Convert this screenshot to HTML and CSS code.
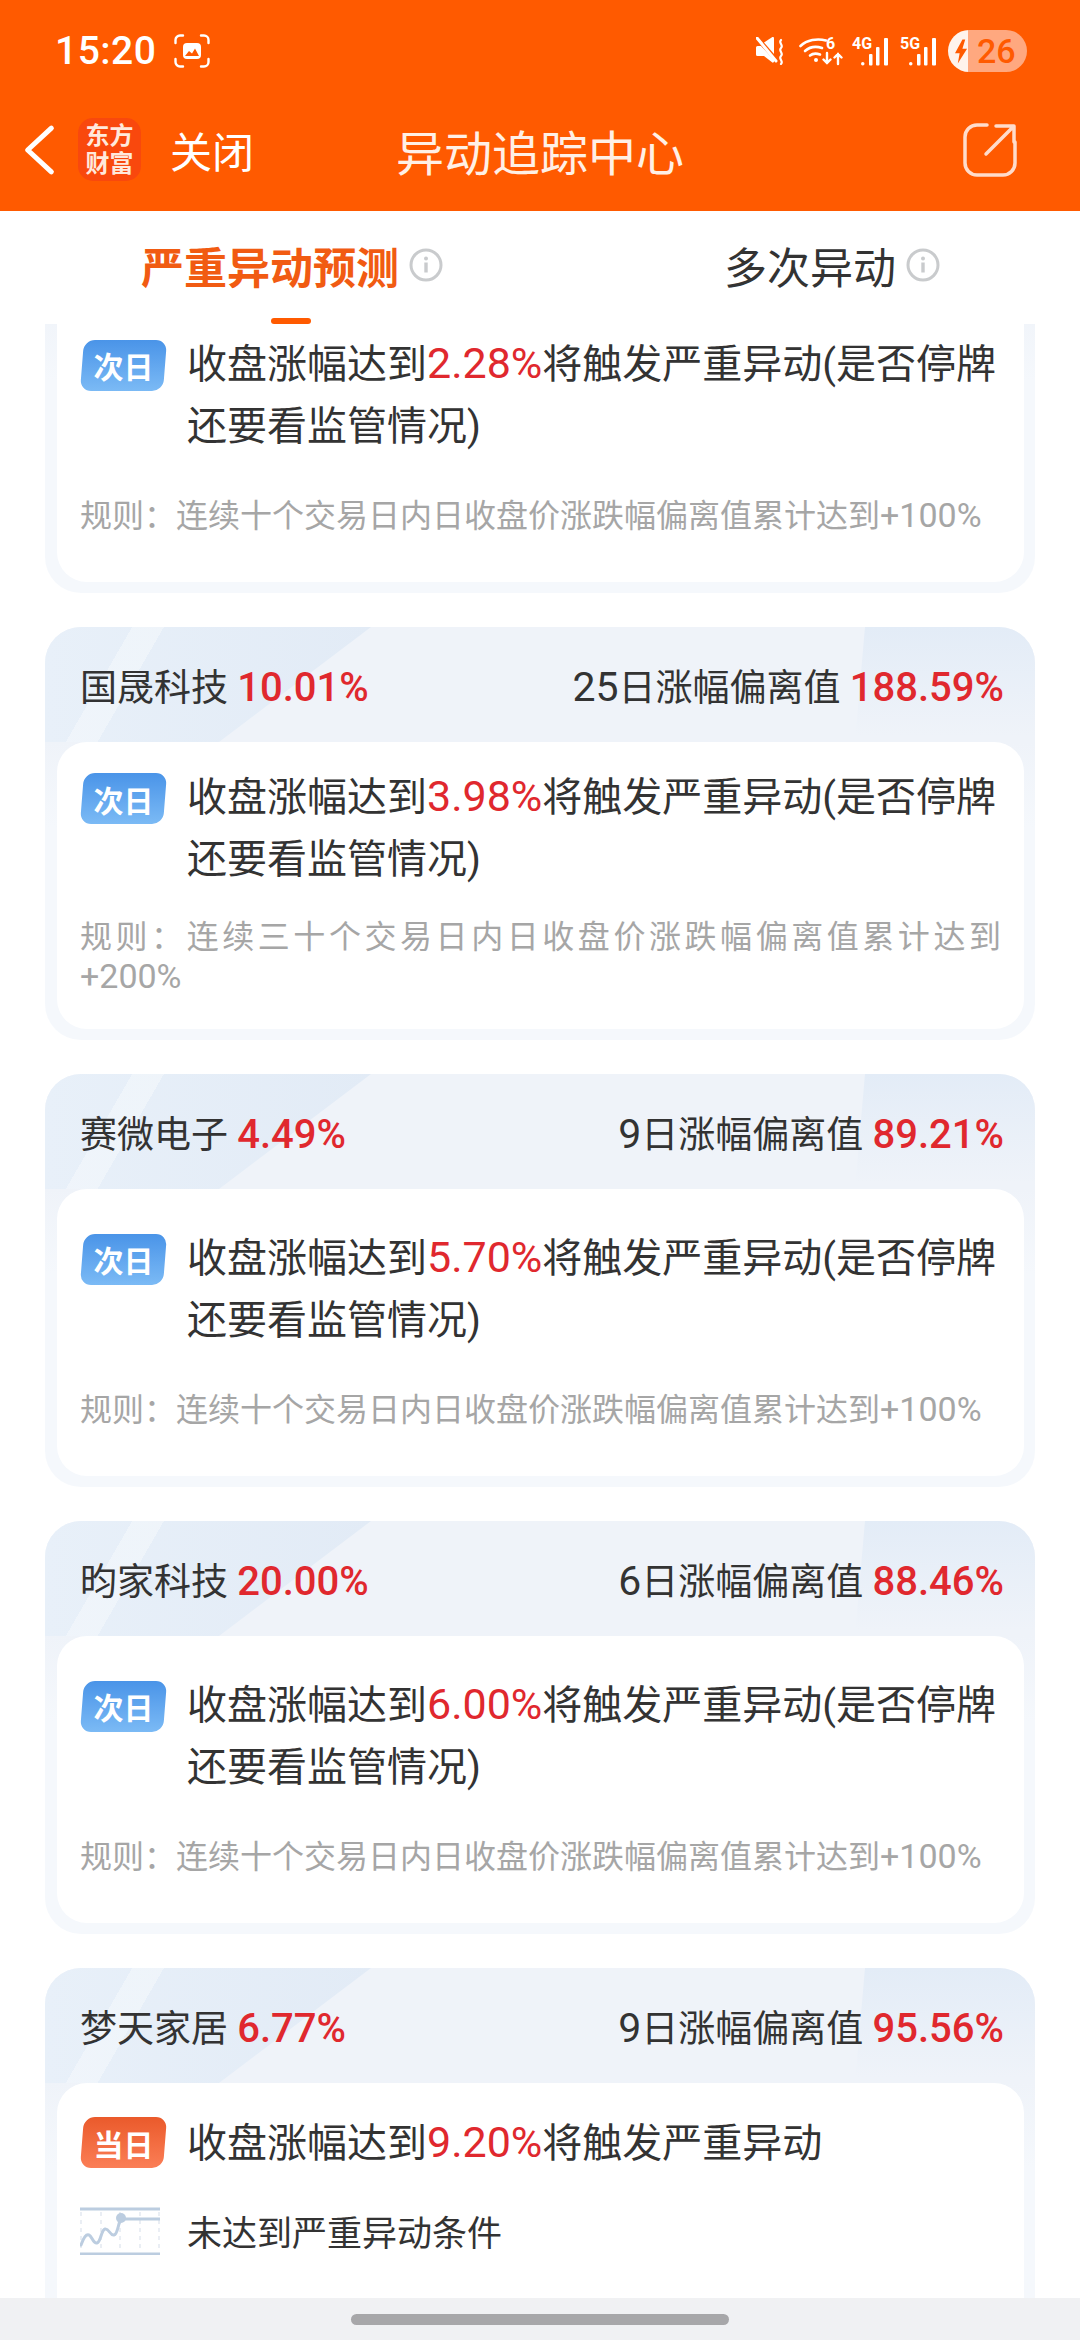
FILE: index.html
```html
<!DOCTYPE html>
<html lang="zh-CN">
<head>
    <meta charset="UTF-8">
    <meta name="viewport" content="width=device-width, initial-scale=1.0">
    <title>异动追踪中心</title>
    <link rel="stylesheet" href="styles.css">
</head>
<body>

<header class="top">
    <div class="status">
        <div class="status-left">
            <span class="time">15:20</span>
            <svg class="shot" viewBox="0 0 36 34" fill="none" stroke="#fff" stroke-width="2.4" stroke-linecap="round">
                <path d="M1.5 9V6a4.5 4.5 0 0 1 4.5-4.5h3M27 1.5h3A4.5 4.5 0 0 1 34.5 6v3M34.5 25v3a4.5 4.5 0 0 1-4.5 4.5h-3M9 32.500H6A4.5 4.500 0 0 1 1.500 28v-3"/>
                <rect x="9" y="9" width="18" height="16" rx="4" fill="#fff" stroke="none"/>
                <path d="M11 22l4-5 3 2.500 3-5 4 7.500z" fill="#ff5a00" stroke="none"/>
            </svg>
        </div>
        <div class="status-right">
            <svg class="ic-mute" viewBox="0 0 29 28" fill="#fff">
                <path d="M0 10.500a1.500 1.500 0 0 1 1.500-1.500H5l13 14v1.500c0 1-1.200 1.500-2 .8L8 19H1.500A1.500 1.500 0 0 1 0 17.500z"/>
                <path d="M8 5.500l8-5.300c.8-.5 2-.1 2 1V17z"/>
                <path d="M1 1l19 23" stroke="#fff" stroke-width="3" stroke-linecap="round"/>
                <path d="M25 3c-3 3 3 5 0 8s3 5 0 8 3 5 0 8" fill="none" stroke="#fff" stroke-width="2.200" stroke-linecap="round"/>
            </svg>
            <svg class="ic-wifi" viewBox="0 0 44 29" fill="none" stroke="#fff" stroke-width="2.600" stroke-linecap="round">
                <path d="M1.500 9C8 3 18 1 27 3.500"/>
                <path d="M6 14c4.500-4 11-5 17-3"/>
                <path d="M11 18.500c2.500-2 6-2.500 10-1"/>
                <circle cx="17" cy="23" r="2" fill="#fff" stroke="none"/>
                <text class="ic-text" x="27" y="12" fill="#fff" stroke="none">6</text>
                <path d="M28 16v10m-3.500-3.500L28 26l3.500-3.500M39 27V17m-3.500 3.500L39 17l3.500 3.500" stroke-width="2.400"/>
            </svg>
            <svg class="ic-signal" viewBox="0 0 38 29" fill="#fff">
                <text class="ic-text" x="0" y="12">4G</text>
                <rect x="9" y="25" width="3.500" height="3.500" rx="1.700"/>
                <rect x="17" y="17" width="3.500" height="11.500" rx="1"/>
                <rect x="24" y="10" width="3.500" height="18.500" rx="1"/>
                <rect x="32" y="1" width="4" height="27.500" rx="1"/>
            </svg>
            <svg class="ic-signal" viewBox="0 0 38 29" fill="#fff">
                <text class="ic-text" x="0" y="12">5G</text>
                <rect x="9" y="25" width="3.500" height="3.500" rx="1.700"/>
                <rect x="17" y="17" width="3.500" height="11.500" rx="1"/>
                <rect x="24" y="10" width="3.500" height="18.500" rx="1"/>
                <rect x="32" y="1" width="4" height="27.500" rx="1"/>
            </svg>
            <div class="battery">
                <svg class="bolt" viewBox="0 0 14 26" fill="#ff5a00"><path d="M8 0L0 15h5l-2 11 10-16H8l3-10z"/></svg>
                <span>26</span>
            </div>
        </div>
    </div>

    <nav class="nav">
        <div class="nav-left">
            <svg class="back" viewBox="0 0 34 54" fill="none" stroke="#fff" stroke-width="5.500" stroke-linecap="round" stroke-linejoin="round">
                <path d="M30 3L4 27l26 24"/>
            </svg>
            <div class="logo"><span>东方</span><span>财富</span></div>
            <span class="close">关闭</span>
        </div>
        <div class="nav-title">异动追踪中心</div>
        <svg class="share" viewBox="0 0 54 54" fill="none" stroke="#ffdccb" stroke-width="3.500" stroke-linecap="round" stroke-linejoin="round">
            <path d="M24 2H14A12 12 0 0 0 2 14v26a12 12 0 0 0 12 12h26a12 12 0 0 0 12-12V19"/>
            <path d="M23 31L50 4M33 3h18v16"/>
        </svg>
    </nav>
</header>

<div class="tabs">
    <div class="tab tab-active">
        <div class="tab-label">
            <span>严重异动预测</span>
            <svg class="info" viewBox="0 0 34 34" fill="none"><circle cx="17" cy="17" r="15" stroke="#c9cbcd" stroke-width="3"/><circle cx="17" cy="10.500" r="2" fill="#c9cbcd"/><rect x="15.300" y="14.500" width="3.400" height="10" fill="#c9cbcd"/></svg>
        </div>
        <div class="tab-line"></div>
    </div>
    <div class="tab">
        <div class="tab-label">
            <span>多次异动</span>
            <svg class="info" viewBox="0 0 34 34" fill="none"><circle cx="17" cy="17" r="15" stroke="#c9cbcd" stroke-width="3"/><circle cx="17" cy="10.500" r="2" fill="#c9cbcd"/><rect x="15.300" y="14.500" width="3.400" height="10" fill="#c9cbcd"/></svg>
        </div>
    </div>
</div>

<main class="list">
    <!-- first card is scrolled up under the tabs -->
    <section class="card card-scrolled">
        <div class="card-head"></div>
        <div class="card-body">
            <div class="title-row">
                <span class="badge badge-next">次日</span>
                <p class="title">收盘涨幅达到<em>2.28%</em>将触发严重异动(是否停牌还要看监管情况)</p>
            </div>
            <p class="rule">规则：连续十个交易日内日收盘价涨跌幅偏离值累计达到<span class="rule-num">+100%</span></p>
        </div>
    </section>

    <section class="card">
        <div class="card-head">
            <span>国晟科技 <em>10.01%</em></span>
            <span><span class="days">25</span>日涨幅偏离值 <em>188.59%</em></span>
        </div>
        <div class="card-body">
            <div class="title-row">
                <span class="badge badge-next">次日</span>
                <p class="title">收盘涨幅达到<em>3.98%</em>将触发严重异动(是否停牌还要看监管情况)</p>
            </div>
            <p class="rule">规则：连续三十个交易日内日收盘价涨跌幅偏离值累计达到<span class="rule-num">+200%</span></p>
        </div>
    </section>

    <section class="card">
        <div class="card-head">
            <span>赛微电子 <em>4.49%</em></span>
            <span><span class="days">9</span>日涨幅偏离值 <em>89.21%</em></span>
        </div>
        <div class="card-body">
            <div class="title-row">
                <span class="badge badge-next">次日</span>
                <p class="title">收盘涨幅达到<em>5.70%</em>将触发严重异动(是否停牌还要看监管情况)</p>
            </div>
            <p class="rule">规则：连续十个交易日内日收盘价涨跌幅偏离值累计达到<span class="rule-num">+100%</span></p>
        </div>
    </section>

    <section class="card">
        <div class="card-head">
            <span>昀家科技 <em>20.00%</em></span>
            <span><span class="days">6</span>日涨幅偏离值 <em>88.46%</em></span>
        </div>
        <div class="card-body">
            <div class="title-row">
                <span class="badge badge-next">次日</span>
                <p class="title">收盘涨幅达到<em>6.00%</em>将触发严重异动(是否停牌还要看监管情况)</p>
            </div>
            <p class="rule">规则：连续十个交易日内日收盘价涨跌幅偏离值累计达到<span class="rule-num">+100%</span></p>
        </div>
    </section>

    <section class="card">
        <div class="card-head">
            <span>梦天家居 <em>6.77%</em></span>
            <span><span class="days">9</span>日涨幅偏离值 <em>95.56%</em></span>
        </div>
        <div class="card-body card-body-today">
            <div class="title-row">
                <span class="badge badge-today">当日</span>
                <p class="title">收盘涨幅达到<em>9.20%</em>将触发严重异动</p>
            </div>
            <div class="note-row">
                <svg class="note-chart" viewBox="0 0 80 48" fill="none" stroke="#bccde0">
                    <path d="M1 5v40M21 5v40M40 5v40M60 5v40M79 5v40" stroke="#e3e9f1" stroke-width="1.500" stroke-dasharray="4 4"/>
                    <path d="M0 2h80M0 47h80" stroke-width="3"/>
                    <path d="M41 12h39" stroke-width="3"/>
                    <path d="M1 38C4 30 6 27 9 28s4 9 8 8 4-13 8-14 5 7 9 6 4-12 7-16" stroke-width="3" stroke-linecap="round"/>
                    <circle cx="41" cy="11" r="5" fill="#bccde0" stroke="none"/>
                </svg>
                <span class="note-text">未达到严重异动条件</span>
            </div>
        </div>
    </section>
</main>

<div class="home-bar"><div class="home-pill"></div></div>

</body>
</html>
```

FILE: styles.css
```css
* {
    box-sizing: border-box;
}
body {
    margin: 0;
    height: 2340px;
    display: flex;
    flex-direction: column;
    overflow: hidden;
    background: #fff;
    color: #333;
    font-family: Roboto, "Noto Sans CJK SC", sans-serif;
}
p {
    margin: 0;
}
em {
    font-style: normal;
    color: #e0282e;
}

/* orange header */
.top {
    height: 211px;
    background: #ff5a00;
    color: #fff;
    flex-shrink: 0;
}
.status {
    height: 102px;
    display: flex;
    justify-content: space-between;
    align-items: center;
    padding: 0 53px 0 55px;
}
.status-left {
    display: flex;
    align-items: center;
    gap: 18px;
}
.time {
    font-size: 39px;
    font-weight: 500;
    letter-spacing: 0.5px;
}
.shot {
    width: 36px;
    height: 34px;
}
.status-right {
    display: flex;
    align-items: center;
}
.ic-mute {
    width: 29px;
    height: 28px;
    margin-right: 14px;
}
.ic-wifi {
    width: 44px;
    height: 29px;
    margin-right: 9px;
}
.ic-signal {
    width: 38px;
    height: 29px;
    margin-right: 10px;
}
.ic-text {
    font-family: Roboto, sans-serif;
    font-size: 16px;
    font-weight: 700;
}
.battery {
    width: 79px;
    height: 42px;
    border-radius: 21px;
    background: linear-gradient(90deg, #fff3ec 20px, #ffa87f 20px);
    display: flex;
    align-items: center;
    padding-left: 7px;
    color: #ff5a00;
    font-size: 34px;
    font-weight: 500;
}
.bolt {
    width: 13px;
    height: 25px;
    margin-right: 9px;
}
.nav {
    height: 109px;
    display: grid;
    grid-template-columns: 1fr auto 1fr;
    align-items: center;
    padding: 0 24px 14px;
}
.nav-left {
    display: flex;
    align-items: center;
}
.back {
    width: 31px;
    height: 52px;
    margin-right: 23px;
}
.logo {
    width: 63px;
    height: 63px;
    border-radius: 15px;
    background: #f9480d;
    display: flex;
    flex-direction: column;
    align-items: center;
    justify-content: center;
    font-size: 24px;
    font-weight: 700;
    line-height: 28px;
    color: #ffe9dc;
}
.close {
    font-size: 42px;
    margin-left: 29px;
}
.nav-title {
    font-size: 48px;
    color: #fff0e6;
}
.share {
    width: 54px;
    height: 54px;
    justify-self: end;
    margin-right: 39px;
}

/* tabs */
.tabs {
    height: 113px;
    display: flex;
    flex-shrink: 0;
}
.tab {
    width: 540px;
    display: flex;
    flex-direction: column;
    align-items: center;
    padding-top: 24px;
    position: relative;
}
.tab-label {
    height: 60px;
    display: flex;
    align-items: center;
    gap: 10px;
    margin-right: -44px;
    font-size: 43px;
}
.tab-active .tab-label {
    color: #f15b12;
    font-weight: 700;
}
.info {
    width: 34px;
    height: 34px;
}
.tab-line {
    width: 40px;
    height: 6px;
    margin-top: 23px;
    margin-left: 42px;
    border-radius: 3px;
    background: #ff5a00;
}

/* card list */
.list {
    flex: 1;
    min-height: 0;
    overflow: hidden;
    display: flex;
    flex-direction: column;
    gap: 34px;
    padding: 0 45px;
}
.card {
    height: 413px;
    flex-shrink: 0;
    display: flex;
    flex-direction: column;
    border-radius: 36px;
    background: linear-gradient(180deg, #eff3f9 0, #eff3f9 115px, #f5f8fc 200px);
    padding: 0 11px 11px 12px;
    position: relative;
    overflow: hidden;
}
.card-scrolled {
    margin-top: -144px;
}
.card-head {
    height: 115px;
    flex-shrink: 0;
    display: flex;
    justify-content: space-between;
    align-items: center;
    padding: 1px 20px 0 23px;
    font-size: 37px;
    position: relative;
}
.card-head em {
    font-size: 40px;
    font-weight: 500;
}
.days {
    font-size: 41px;
}
/* facets drawn on the head background */
.card::before,
.card::after {
    content: "";
    position: absolute;
    top: 0;
    height: 115px;
}
.card::before {
    left: 0;
    width: 330px;
    background:
        linear-gradient(120deg, transparent 22%, rgba(255, 255, 255, 0.35) 22%, rgba(255, 255, 255, 0.35) 30%, transparent 30%),
        linear-gradient(90deg, #e8f0f9, #e2ebf6);
    clip-path: polygon(0 0, 326px 0, 174px 115px, 0 115px);
}
.card::after {
    right: 0;
    width: 180px;
    background: linear-gradient(180deg, #e3ecf7, #eff3f9 95%);
    clip-path: polygon(10px 0, 100% 0, 100% 115px, 0 115px);
}
.card-head,
.card-body {
    z-index: 1;
}
.card-body {
    flex: 1;
    min-height: 0;
    border-radius: 30px;
    background: #fff;
    display: flex;
    flex-direction: column;
    justify-content: space-evenly;
    padding: 0 23px 7px;
    position: relative;
}
.card-body-today {
    justify-content: flex-start;
    padding-top: 30px;
    gap: 30px;
}
.title-row {
    display: flex;
    gap: 22px;
}
.badge {
    flex-shrink: 0;
    width: 83px;
    height: 51px;
    margin: 6px 0 0 2px;
    display: flex;
    align-items: center;
    justify-content: center;
    color: #fff;
    font-size: 30px;
    font-weight: 700;
    position: relative;
    z-index: 0;
}
.card-body-today .badge {
    margin-top: 4px;
}
.badge::before {
    content: "";
    position: absolute;
    inset: 0;
    z-index: -1;
    border-radius: 11px;
    transform: skewX(-4.5deg);
}
.badge-next::before {
    background: linear-gradient(180deg, #4a94e8, #7bbaf5);
}
.badge-today::before {
    background: linear-gradient(180deg, #ea5a2b, #fb7e56);
}
.title {
    font-size: 40px;
    line-height: 62px;
}
.title em {
    font-size: 43px;
    line-height: 40px;
}
.rule {
    font-size: 32px;
    line-height: 40px;
    color: #a6a6a6;
    text-align: justify;
}
.rule-num {
    font-size: 34px;
    line-height: 32px;
}
.note-row {
    display: flex;
    align-items: center;
    gap: 27px;
}
.note-chart {
    width: 80px;
    height: 48px;
    flex-shrink: 0;
}
.note-text {
    font-size: 35px;
}

/* gesture bar */
.home-bar {
    height: 42px;
    flex-shrink: 0;
    background: #f0f1f3;
    display: flex;
    justify-content: center;
    padding-top: 16px;
}
.home-pill {
    width: 378px;
    height: 11px;
    border-radius: 6px;
    background: #a7a7a9;
}
```
